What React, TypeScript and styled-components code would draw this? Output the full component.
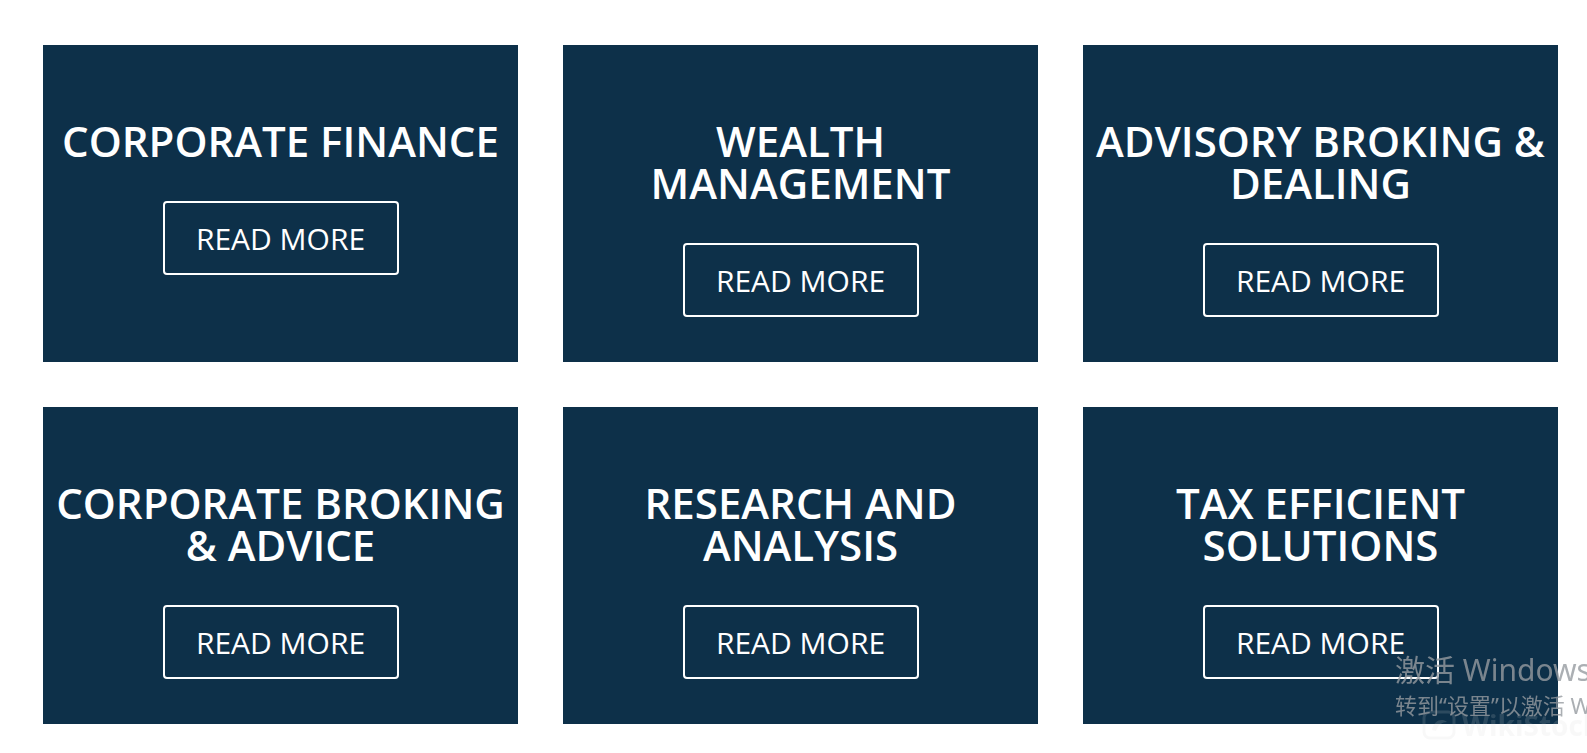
import styled, { createGlobalStyle } from "styled-components";

const GlobalStyle = createGlobalStyle`
    html, body {
        margin: 0;
        padding: 0;
        background: #ffffff;
        overflow: hidden;
    }
    body {
        font-family: "Open Sans", "Noto Sans", sans-serif;
    }
`;

interface Service {
    lines: string[];
}

const services: Service[] = [
    { lines: ["Corporate Finance"] },
    { lines: ["Wealth", "Management"] },
    { lines: ["Advisory Broking &", "Dealing"] },
    { lines: ["Corporate Broking", "& Advice"] },
    { lines: ["Research and", "Analysis"] },
    { lines: ["Tax Efficient", "Solutions"] },
];

const Page = styled.div`
    width: 1587px;
    height: 753px;
    box-sizing: border-box;
    padding: 45px 0 0 43px;
`;

const Grid = styled.section`
    display: grid;
    grid-template-columns: repeat(3, 475px);
    grid-auto-rows: 317px;
    column-gap: 45px;
    row-gap: 45px;
`;

const Card = styled.div`
    background-color: #0d3049;
    display: flex;
    flex-direction: column;
    align-items: center;
    padding-top: 75px;
    box-sizing: border-box;
`;

const Title = styled.h2`
    margin: 0;
    color: #ffffff;
    font-family: "Open Sans", sans-serif;
    font-weight: 600;
    font-size: 42px;
    line-height: 42px;
    text-transform: uppercase;
    text-align: center;
    white-space: nowrap;
`;

const ReadMore = styled.a`
    margin-top: 39px;
    width: 236px;
    height: 74px;
    box-sizing: border-box;
    display: flex;
    align-items: center;
    justify-content: center;
    border: 2px solid #ffffff;
    border-radius: 4px;
    color: #ffffff;
    font-family: "Open Sans", sans-serif;
    font-weight: 400;
    font-size: 30px;
    text-decoration: none;
    text-transform: uppercase;
    cursor: pointer;
`;

const Watermark = styled.div`
    position: fixed;
    left: 1395px;
    top: 650px;
    white-space: nowrap;
    color: rgba(150, 155, 160, 0.8);
    pointer-events: none;
`;

const WatermarkLine = styled.div<{ $size: number; $height: number }>`
    font-size: ${props => props.$size}px;
    line-height: ${props => props.$height}px;
    font-family: "Noto Sans", "Noto Sans CJK SC", sans-serif;
`;

const StockMark = styled.div`
    position: fixed;
    left: 1422px;
    top: 706px;
    display: flex;
    align-items: center;
    gap: 6px;
    color: rgba(210, 210, 210, 0.16);
    font-family: "Open Sans", sans-serif;
    font-weight: 700;
    font-size: 28px;
    pointer-events: none;
`;

export default function App() {
    return (
        <>
            <GlobalStyle />
            <Page>
                <Grid>
                    {services.map((service, index) => (
                        <Card key={index}>
                            <Title>
                                {service.lines.map((line, i) => (
                                    <span key={i}>
                                        {line}
                                        {i < service.lines.length - 1 && <br />}
                                    </span>
                                ))}
                            </Title>
                            <ReadMore>Read More</ReadMore>
                        </Card>
                    ))}
                </Grid>
            </Page>
            <StockMark>
                <svg width="34" height="30" viewBox="0 0 34 30">
                    <rect x="2" y="2" width="30" height="26" rx="6" fill="none" stroke="currentColor" strokeWidth="3" />
                    <path d="M10 20 C12 10, 20 8, 25 12 C20 12, 16 15, 14 21 Z" fill="currentColor" />
                </svg>
                <span>WikiStock</span>
            </StockMark>
            <Watermark>
                <WatermarkLine $size={30} $height={40}>激活 Windows</WatermarkLine>
                <WatermarkLine $size={22} $height={30}>转到“设置”以激活 Windows。</WatermarkLine>
            </Watermark>
        </>
    );
}
